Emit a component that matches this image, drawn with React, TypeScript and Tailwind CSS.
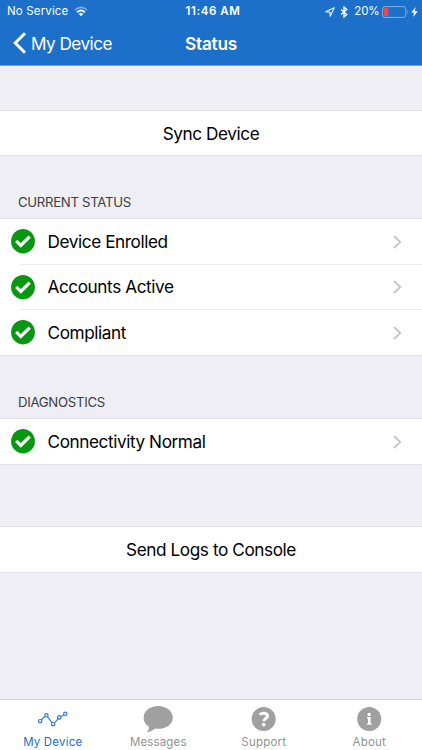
import React from 'react';

interface StatusItem {
  label: string;
}

const statusItems: StatusItem[] = [
  { label: 'Device Enrolled' },
  { label: 'Accounts Active' },
  { label: 'Compliant' },
];

const CheckBadge: React.FC = () => (
  <svg viewBox="0 0 24 25" className="w-6 h-[25px] shrink-0">
    <ellipse cx="12" cy="12.2" rx="11.9" ry="12.2" fill="#079710" />
    <path d="M5.2 11.9 9.8 16.4 18.7 7.6" fill="none" stroke="#fff" strokeWidth="3.2" />
  </svg>
);

const Disclosure: React.FC = () => (
  <svg viewBox="0 0 9 14" className="w-[9px] h-3.5 shrink-0">
    <path d="M1 1 7.3 7 1 13" fill="none" stroke="#c5c5ca" strokeWidth="1.8" />
  </svg>
);

const StatusRow: React.FC<{ label: string; last?: boolean }> = ({ label, last }) => (
  <div className="relative h-[45.6px] flex items-center pl-[11px]">
    <CheckBadge />
    <span className="pl-[12.5px] text-[17.2px] tracking-[-0.42px] text-black">{label}</span>
    <div className="ml-auto pr-5">
      <Disclosure />
    </div>
    {!last && <div className="absolute left-5 right-0 bottom-0 h-px bg-[#ebebed]" />}
  </div>
);

const StatusBar: React.FC = () => (
  <div className="h-[22px] pt-px grid grid-cols-[1fr_auto_1fr] items-center text-[11.5px] leading-none text-white">
    <div className="flex items-center pl-[7px]">
      <span className="tracking-[0.15px]">No Service</span>
      <svg viewBox="0 0 14 11" className="ml-[6px] w-3.5 h-[11px]">
        <path d="M1 4Q7-1.2 13 4" fill="none" stroke="#83afe0" strokeWidth="1.6" />
        <path d="M3 6.2Q7 2.8 11 6.2" fill="none" stroke="#fff" strokeWidth="1.9" />
        <path d="M4.6 7.8Q7 6 9.4 7.8L7 10.3Z" fill="#fff" />
      </svg>
    </div>
    <span className="pl-[4px] font-semibold tracking-[0.6px]">11:46 AM</span>
    <div className="flex items-center justify-end pr-[4px]">
      <svg viewBox="0 0 10 10" className="w-2.5 h-2.5">
        <path d="M.6 4.8 9.2.8 5.2 9.2 4.9 5.1Z" fill="none" stroke="#e6f0fb" strokeWidth="1.1" strokeLinejoin="round" />
      </svg>
      <svg viewBox="0 0 8 12" className="ml-[5px] w-2 h-3">
        <path d="M1 3.4 6.8 8.4 4 11V1L6.8 3.6 1 8.6" fill="none" stroke="#fff" strokeWidth="1.3" />
      </svg>
      <span className="ml-[6px] tracking-[-0.1px]">20%</span>
      <svg viewBox="0 0 27 12" className="ml-[2px] w-[27px] h-3">
        <rect x=".6" y=".6" width="23.2" height="10.8" rx="2.4" fill="none" stroke="#83afe0" />
        <rect x="2" y="2" width="4.4" height="8" rx=".7" fill="#f04744" />
        <path d="M25.1 4Q26.7 6 25.1 8Z" fill="#83afe0" />
      </svg>
      <svg viewBox="0 0 7 10" className="ml-[2.5px] w-[7px] h-2.5">
        <path d="M4.7 0 .2 5.6H3L2.2 10 6.8 4.2H3.8Z" fill="#fff" />
      </svg>
    </div>
  </div>
);

const TabBar: React.FC = () => (
  <div className="h-[51px] shrink-0 grid grid-cols-4 border-t border-[#cfcfd4] bg-white text-[11.5px] leading-[13px] text-[#929292]">
    <div className="flex flex-col items-center text-[#1b70ca]">
      <svg viewBox="0 0 32 36" className="w-8 h-[36px]" fill="none" stroke="#2d7bce" strokeWidth="1.2">
        <path d="m4.4 19.9 3.3-3.4M10.3 16.5l5 6.4M17.6 22.7l4.1-4.4M24.4 16.6l2.2-1.6" />
        <circle cx="3.2" cy="21.2" r="1.7" />
        <circle cx="9.4" cy="15.3" r="1.7" />
        <circle cx="16.1" cy="24.2" r="1.7" />
        <circle cx="22.3" cy="17.4" r="1.7" />
        <circle cx="28.3" cy="13.8" r="1.7" />
      </svg>
      <span className="tracking-[0.2px]">My Device</span>
    </div>
    <div className="flex flex-col items-center">
      <svg viewBox="0 0 32 36" className="w-8 h-[36px]">
        <path d="M16.2 6C8 6 1.6 11 1.6 17.7c0 4.2 2.4 7.2 5.4 9-.2 2.3-.8 3.9-2 5.6 3.4-.2 5.8-1.7 7.6-3.7 10.2 1.4 18.2-3.6 18.2-10.9C30.8 11 24.2 6 16.2 6Z" fill="#a0a0a0" />
      </svg>
      <span className="tracking-[0.15px]">Messages</span>
    </div>
    <div className="flex flex-col items-center">
      <svg viewBox="0 0 26 36" className="w-[26px] h-[36px]">
        <circle cx="12.7" cy="19" r="12" fill="#a0a0a0" />
        <path d="M9 14.9C10 12.6 16.5 12.4 16.5 16c0 2.6-3.7 2.5-3.7 5.3" fill="none" stroke="#fff" strokeWidth="3" />
        <circle cx="12.7" cy="24.6" r="1.9" fill="#fff" />
      </svg>
      <span className="tracking-[0.2px]">Support</span>
    </div>
    <div className="flex flex-col items-center">
      <svg viewBox="0 0 26 36" className="w-[26px] h-[36px]">
        <circle cx="13.2" cy="19" r="12" fill="#a0a0a0" />
        <circle cx="13.1" cy="14.4" r="1.6" fill="#fff" />
        <path d="M11 17h3.6v6.4h1.1v1.4H10.9v-1.4H12v-5h-1z" fill="#fff" />
      </svg>
      <span className="tracking-[0.2px]">About</span>
    </div>
  </div>
);

const App: React.FC = () => {
  return (
    <div className="w-[422px] h-[750px] flex flex-col overflow-hidden bg-[#efeef4] font-['Inter',sans-serif]">
      <header className="h-[66px] shrink-0 bg-[#1c70ca] border-b border-[#78a6dc] text-white">
        <StatusBar />
        <div className="h-[43px] grid grid-cols-[1fr_auto_1fr] items-center text-[17.2px]">
          <div className="flex items-center pl-[13px]">
            <svg viewBox="0 0 14 22" className="w-3.5 h-[22px]">
              <path d="M12 1.2 2.2 11 12 20.8" fill="none" stroke="#fff" strokeWidth="3" />
            </svg>
            <span className="ml-1 tracking-[-0.55px]">My Device</span>
          </div>
          <span className="font-semibold tracking-[-0.2px]">Status</span>
        </div>
      </header>

      <main className="flex-1 flex flex-col pt-11">
        <div className="h-[46px] flex items-center justify-center border-y border-[#e2e1e6] bg-white text-[17.2px] tracking-[-0.42px] text-black">
          <span className="pt-px">Sync Device</span>
        </div>

        <h2 className="h-[62px] pt-[36px] pl-[18px] text-[13.2px] leading-5 tracking-[-0.3px] text-[#3c3c41]">CURRENT STATUS</h2>
        <div className="h-[138px] border-y border-[#e2e1e6] bg-white">
          {statusItems.map((item, i) => (
            <StatusRow key={item.label} label={item.label} last={i === statusItems.length - 1} />
          ))}
        </div>

        <h2 className="h-[62px] pt-[36px] pl-[18px] text-[13.2px] leading-5 tracking-[-0.3px] text-[#3c3c41]">DIAGNOSTICS</h2>
        <div className="h-[47px] border-y border-[#e2e1e6] bg-white">
          <StatusRow label="Connectivity Normal" last />
        </div>

        <div className="mt-[61px] h-[47px] flex items-center justify-center border-y border-[#e2e1e6] bg-white text-[17.2px] tracking-[-0.42px] text-black">
          Send Logs to Console
        </div>
      </main>

      <TabBar />
    </div>
  );
};

export default App;
